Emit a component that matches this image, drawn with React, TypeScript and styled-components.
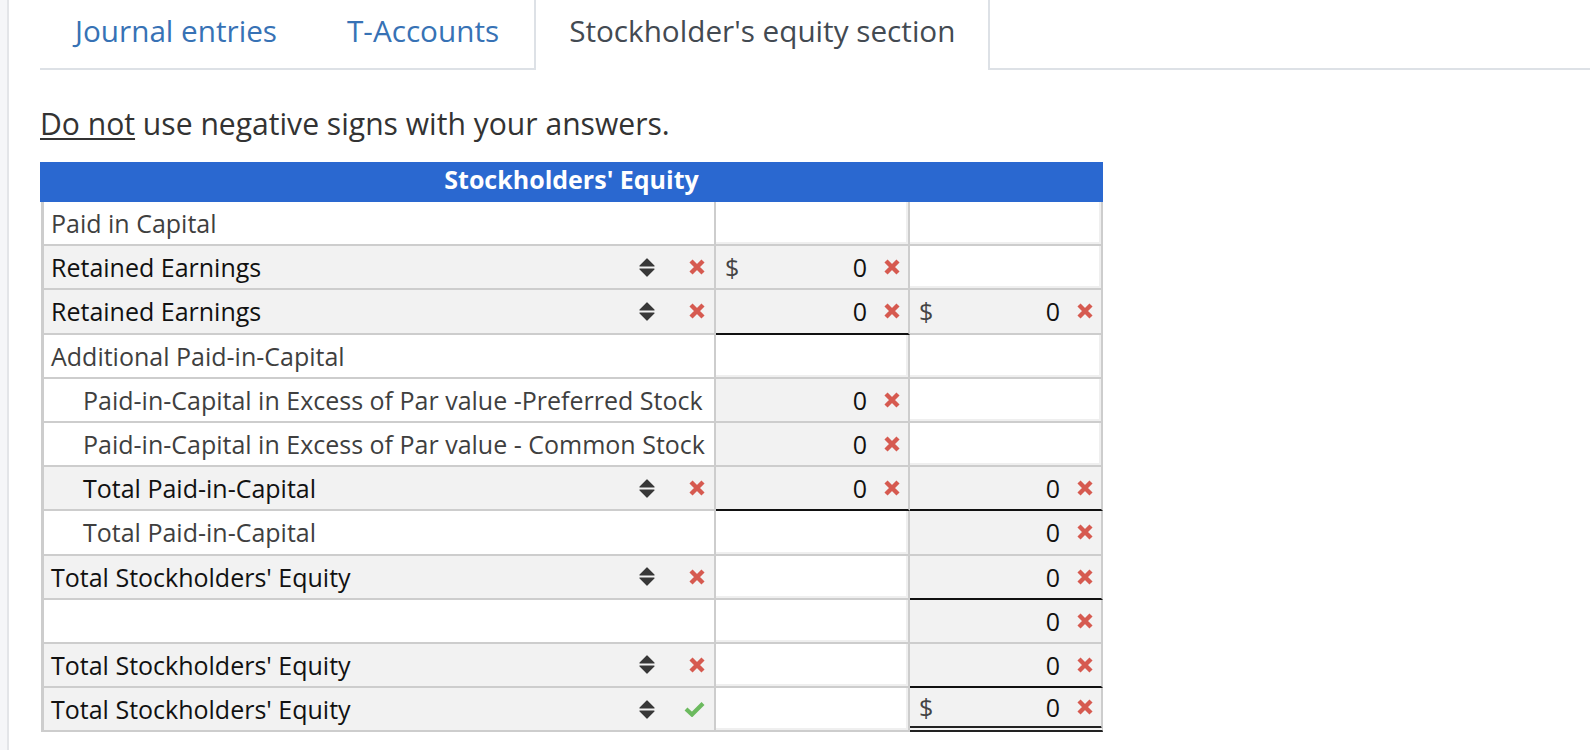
import React from "react"
import styled, {createGlobalStyle} from "styled-components"

const GlobalStyle = createGlobalStyle`
    html, body {
        margin: 0;
        padding: 0;
        background: #fff;
    }
    body {
        font-family: "Open Sans", "Liberation Sans", sans-serif;
    }
`

type Rule = "single" | "double"

type Amount = {
    dollar?: boolean
    rule?: Rule
}

type RowData = {
    label: string
    kind: "static" | "select"
    indent?: boolean
    status?: "wrong" | "right"
    first?: Amount
    second?: Amount
}

const rows: RowData[] = [
    {label: "Paid in Capital", kind: "static"},
    {label: "Retained Earnings", kind: "select", status: "wrong", first: {dollar: true}},
    {label: "Retained Earnings", kind: "select", status: "wrong", first: {rule: "single"}, second: {dollar: true}},
    {label: "Additional Paid-in-Capital", kind: "static"},
    {label: "Paid-in-Capital in Excess of Par value -Preferred Stock", kind: "static", indent: true, first: {}},
    {label: "Paid-in-Capital in Excess of Par value - Common Stock", kind: "static", indent: true, first: {}},
    {label: "Total Paid-in-Capital", kind: "select", indent: true, status: "wrong", first: {rule: "single"}, second: {rule: "single"}},
    {label: "Total Paid-in-Capital", kind: "static", indent: true, second: {}},
    {label: "Total Stockholders' Equity", kind: "select", status: "wrong", second: {rule: "single"}},
    {label: "", kind: "static", second: {}},
    {label: "Total Stockholders' Equity", kind: "select", status: "wrong", second: {rule: "single"}},
    {label: "Total Stockholders' Equity", kind: "select", status: "right", second: {dollar: true, rule: "double"}},
]

const tabs = ["Journal entries", "T-Accounts", "Stockholder's equity section"]

const WrongMark = () => (
    <svg width="16" height="16" viewBox="0 0 16 16">
        <path d="M2 2 L14 14 M14 2 L2 14" stroke="#d65a50" strokeWidth="4.4" fill="none"/>
    </svg>
)

const RightMark = () => (
    <svg width="21" height="16" viewBox="0 0 21 16">
        <path d="M2 8 L8 13.5 L19 2.5" stroke="#6cba5f" strokeWidth="4.2" fill="none" strokeLinejoin="miter"/>
    </svg>
)

const SortArrows = () => (
    <svg width="16" height="19" viewBox="0 0 16 19">
        <path d="M1 8 L8 1 L15 8 Z" fill="#383838" stroke="#383838" strokeWidth="1.2" strokeLinejoin="round"/>
        <path d="M1 11 L15 11 L8 18 Z" fill="#383838" stroke="#383838" strokeWidth="1.2" strokeLinejoin="round"/>
    </svg>
)

const AmountBox: React.FC<{ amount?: Amount }> = ({amount}) => {
    if (!amount) {
        return <AmountCell $filled={false}/>
    }
    return (
        <AmountCell $filled={true} $rule={amount.rule}>
            {amount.dollar && <Dollar>$</Dollar>}
            <Value>0</Value>
            <Mark><WrongMark/></Mark>
        </AmountCell>
    )
}

export default function App() {
    return (
        <>
            <GlobalStyle/>
            <Page>
                <SideStrip/>
                <Main>
                    <TabBar>
                        {tabs.map((tab, i) => (
                            <Tab key={tab} $active={i === tabs.length - 1}>{tab}</Tab>
                        ))}
                    </TabBar>
                    <Instruction><u>Do not</u> use negative signs with your answers.</Instruction>
                    <Sheet>
                        <SheetHeader>Stockholders' Equity</SheetHeader>
                        <SheetBody>
                            {rows.map((row, i) => (
                                <Row key={i}>
                                    <LabelCell $select={row.kind === "select"} $indent={!!row.indent}>
                                        <LabelText>{row.label}</LabelText>
                                        {row.kind === "select" && (
                                            <>
                                                <Arrows><SortArrows/></Arrows>
                                                <StatusMark>
                                                    {row.status === "right" ? <RightMark/> : <WrongMark/>}
                                                </StatusMark>
                                            </>
                                        )}
                                    </LabelCell>
                                    <AmountBox amount={row.first}/>
                                    <AmountBox amount={row.second}/>
                                </Row>
                            ))}
                        </SheetBody>
                    </Sheet>
                </Main>
            </Page>
        </>
    )
}

const Page = styled.div`
    display: flex;
    min-height: 750px;
`

const SideStrip = styled.div`
    width: 7px;
    flex-shrink: 0;
    background: #f5f6f8;
    border-right: 2px solid #e3e5e8;
`

const Main = styled.div`
    flex: 1;
    padding-left: 31px;
`

const TabBar = styled.div`
    display: flex;
    height: 68px;
    border-bottom: 2px solid #dde1e6;
`

const Tab = styled.div<{ $active: boolean }>`
    height: ${p => p.$active ? "70px" : "68px"};
    box-sizing: border-box;
    padding: 0 33px 6px;
    line-height: 62px;
    font-size: 29.7px;
    white-space: nowrap;
    color: ${p => p.$active ? "#434a52" : "#3772b5"};
    background: #fff;
    border-left: 2px solid ${p => p.$active ? "#dde1e6" : "transparent"};
    border-right: 2px solid ${p => p.$active ? "#dde1e6" : "transparent"};
`

const Instruction = styled.p`
    margin: 34px 0 18px;
    font-size: 30.1px;
    line-height: 40px;
    color: #333;

    u {
        text-decoration-thickness: 2px;
        text-underline-offset: 3px;
    }
`

const Sheet = styled.div`
    width: 1063px;
`

const SheetHeader = styled.div`
    height: 40px;
    box-sizing: border-box;
    padding-bottom: 6px;
    background: #2a68d0;
    color: #fff;
    font-size: 25px;
    font-weight: 700;
    line-height: 34px;
    text-align: center;
`

const SheetBody = styled.div`
    margin-left: 1px;
    border-left: 3px solid #cdcdcd;
`

const Row = styled.div`
    display: grid;
    grid-template-columns: 672px 194px 193px;
`

const LabelCell = styled.div<{ $select: boolean; $indent: boolean }>`
    display: flex;
    align-items: center;
    height: 42.2px;
    padding: 0 9px 0 ${p => p.$indent ? "39px" : "7px"};
    border-right: 2px solid #cdcdcd;
    border-bottom: 2px solid #cdcdcd;
    background: ${p => p.$select ? "#f2f2f2" : "#fff"};
    color: ${p => p.$select ? "#111" : "#3f3f3f"};
    font-size: 25px;
    line-height: 42px;
    white-space: nowrap;
`

const LabelText = styled.span`
    flex: 1;
`

const Arrows = styled.span`
    display: flex;
`

const StatusMark = styled.span`
    display: flex;
    justify-content: flex-end;
    width: 22px;
    margin-left: 28px;
`

const AmountCell = styled.div<{ $filled: boolean; $rule?: Rule }>`
    display: flex;
    align-items: center;
    height: ${p => p.$rule === "double" ? "38.2px" : "42.2px"};
    padding: 0 8px 0 9px;
    border-right: 2px solid #cdcdcd;
    border-bottom: ${p => p.$rule === "double" ? "6px double #222" : p.$rule === "single" ? "2px solid #111" : "2px solid #cdcdcd"};
    background: ${p => p.$filled ? "#f2f2f2" : "#fff"};
    box-shadow: ${p => p.$filled ? "none" : "inset -2px -2px 0 #efefef"};
    font-size: 25px;
    line-height: 42px;
`

const Dollar = styled.span`
    color: #444;
`

const Value = styled.span`
    margin-left: auto;
    color: #111;
`

const Mark = styled.span`
    display: flex;
    margin-left: 17px;
`
